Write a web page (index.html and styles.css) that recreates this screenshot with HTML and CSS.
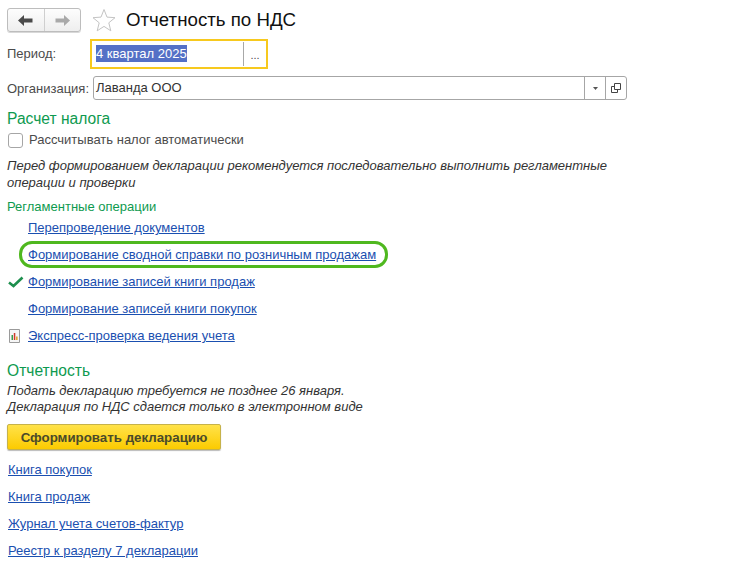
FILE: index.html
```html
<!DOCTYPE html>
<html lang="ru">
<head>
<meta charset="utf-8">
<title>Отчетность по НДС</title>
<link rel="stylesheet" href="styles.css">
</head>
<body>
<div class="page">
  <header class="toolbar">
    <div class="nav">
      <button class="nav-btn" type="button" aria-label="Назад">
        <svg width="15" height="11" viewBox="0 0 15 11"><path d="M0 5.5 6 0v3.500h8.500v4H6V11z" fill="#4a4a4a"/></svg>
      </button>
      <button class="nav-btn" type="button" aria-label="Вперед">
        <svg width="15" height="11" viewBox="0 0 15 11"><path d="M15 5.500 9 0v3.500H.5v4H9V11z" fill="#a9a9a9"/></svg>
      </button>
    </div>
    <svg class="star" width="24" height="24" viewBox="0 0 24 24"><path d="M12 1.500l3 7.600 8 .6-6.200 5.100 2 8-6.800-4.400-6.800 4.400 2-8L1 9.700l8-.6z" fill="#fff" stroke="#c4c4c4" stroke-width="1"/></svg>
    <h1 class="title">Отчетность по НДС</h1>
  </header>

  <div class="row row-period">
    <span class="label">Период:</span>
    <div class="period-field">
      <span class="period-value"><span class="selected">4 квартал 2025</span></span>
      <span class="period-btn">...</span>
    </div>
  </div>

  <div class="row row-org">
    <span class="label">Организация:</span>
    <div class="org-field">
      <span class="org-value">Лаванда ООО</span>
      <span class="org-btn"><svg width="5" height="3" viewBox="0 0 5 3"><path d="M0 0h5L2.500 3z" fill="#555"/></svg></span>
      <span class="org-btn"><svg width="10" height="10" viewBox="0 0 10 10"><path d="M3.500.5h6v6h-6zM3.500 3.500H.5v6h6V6.500" fill="none" stroke="#444"/></svg></span>
    </div>
  </div>

  <h2 class="section section-tax">Расчет налога</h2>
  <label class="check-row"><span class="checkbox"></span><span class="check-text">Рассчитывать налог автоматически</span></label>
  <p class="note note-ops">Перед формированием декларации рекомендуется последовательно выполнить регламентные<br>операции и проверки</p>
  <h3 class="subsection">Регламентные операции</h3>

  <ul class="ops">
    <li class="op"><span class="op-icon"></span><a href="#">Перепроведение документов</a></li>
    <li class="op op-ring"><span class="op-icon"></span><a href="#">Формирование сводной справки по розничным продажам</a></li>
    <li class="op"><span class="op-icon"><svg width="16" height="12" viewBox="0 0 16 12"><path d="M1 6.500l4.500 3.500L14.500 1.500" fill="none" stroke="#1e8f4e" stroke-width="2.600"/></svg></span><a href="#">Формирование записей книги продаж</a></li>
    <li class="op"><span class="op-icon"></span><a href="#">Формирование записей книги покупок</a></li>
    <li class="op"><span class="op-icon"><svg class="report" width="13" height="14" viewBox="0 0 13 14"><path d="M1.500.5h10v13h-10z" fill="#f6f6f6" stroke="#9a9a9a"/><path d="M3.500 6h1.500v5H3.500z" fill="#3a9a4a"/><path d="M5.800 4h1.500v7H5.800z" fill="#d03a2a"/><path d="M8.100 7.500h1.500V11H8.100z" fill="#e0a020"/></svg></span><a href="#">Экспресс-проверка ведения учета</a></li>
  </ul>

  <h2 class="section section-report">Отчетность</h2>
  <p class="note note-report">Подать декларацию требуется не позднее 26 января.<br>Декларация по НДС сдается только в электронном виде</p>
  <button class="primary" type="button">Сформировать декларацию</button>

  <ul class="reports">
    <li><a href="#">Книга покупок</a></li>
    <li><a href="#">Книга продаж</a></li>
    <li><a href="#">Журнал учета счетов-фактур</a></li>
    <li><a href="#">Реестр к разделу 7 декларации</a></li>
  </ul>
</div>
</body>
</html>
```

FILE: styles.css
```css
*, *::after { box-sizing: border-box; }
html, body { margin: 0; padding: 0; background: #fff; }
body { font-family: "Liberation Sans", Arial, sans-serif; font-size: 13px; color: #4b4b4b; overflow: hidden; }
.page { width: 756px; height: 567px; padding: 8px 0 0 7px; overflow: hidden; }
a { color: #1a4fb0; text-decoration: underline; }
ul { list-style: none; margin: 0; padding: 0; }
h1, h2, h3, p { margin: 0; font-weight: 400; }

.toolbar { display: flex; align-items: center; height: 24px; }
.nav { display: flex; width: 74px; height: 24px; border: 1px solid #bdbdbd; border-radius: 3px; background: linear-gradient(#fdfdfd, #eeeeee); box-shadow: 0 1px 0 #d8d8d8; }
.nav-btn { flex: 1; display: flex; align-items: center; justify-content: center; padding: 0; border: 0; background: none; }
.nav-btn + .nav-btn { border-left: 1px solid #cfcfcf; }
.star { margin-left: 11px; }
.title { margin-left: 10px; font-size: 18.700px; color: #111; line-height: 24px; }

.row { display: flex; align-items: center; }
.label { color: #4b4b4b; }
.row-period { margin-top: 7px; height: 30px; }
.row-period .label { width: 83px; padding-bottom: 2px; }
.period-field { display: flex; align-items: center; width: 178px; height: 30px; border: 2px solid #f7c91e; padding-left: 4px; }
.period-value { flex: 1; color: #fff; padding-bottom: 2px; }
.selected { background: #5470c6; display: inline-block; line-height: 17px; }
.period-btn { width: 23px; height: 24px; border-left: 1px solid #a8a8a8; text-align: center; line-height: 26px; font-size: 11px; }

.row-org { margin-top: 7px; height: 24px; }
.row-org .label { width: 86px; }
.org-field { display: flex; width: 534px; height: 24px; border: 1px solid #a6a6a6; border-radius: 3px; }
.org-value { flex: 1; padding-left: 2px; line-height: 22px; color: #333; }
.org-btn { width: 21px; display: flex; align-items: center; justify-content: center; border-left: 1px solid #a6a6a6; }

.section { color: #0e9a4f; font-size: 15.600px; line-height: 20px; }
.section-tax { margin-top: 9px; }
.check-row { display: flex; align-items: center; height: 16px; margin-top: 3px; padding-left: 1px; gap: 6px; }
.checkbox { width: 15px; height: 15px; border: 1px solid #a6a6a6; border-radius: 3px; background: #fff; }
.check-text { padding-bottom: 2px; }
.note { font-style: italic; color: #333; line-height: 17px; }
.note-ops { margin-top: 9px; }
.subsection { margin-top: 9px; color: #0e9a4f; font-size: 13px; line-height: 13px; }

.ops { margin-top: 1px; }
.op { display: flex; align-items: center; height: 27px; }
.op-icon { width: 21px; display: flex; justify-content: flex-start; padding-left: 1px; }
.op-ring { position: relative; }
.op-ring::after { content: ""; position: absolute; left: 12px; top: 0; width: 369px; height: 27px; border: 3px solid #4fb81f; border-radius: 13px; pointer-events: none; }

.section-report { margin-top: 12px; }
.note-report { margin-top: 2px; line-height: 16px; }
.primary { display: block; width: 214px; height: 26px; margin-top: 9px; padding: 0; border: 1px solid #c6b24a; border-radius: 2px; background: linear-gradient(#ffe24a, #fccb00); font: 700 13.300px "Liberation Sans", Arial, sans-serif; color: #4a4a2a; box-shadow: 0 1px 1px #bbb; }
.reports { margin-top: 6px; padding-left: 1px; }
.reports li { height: 27px; line-height: 27px; }
```
